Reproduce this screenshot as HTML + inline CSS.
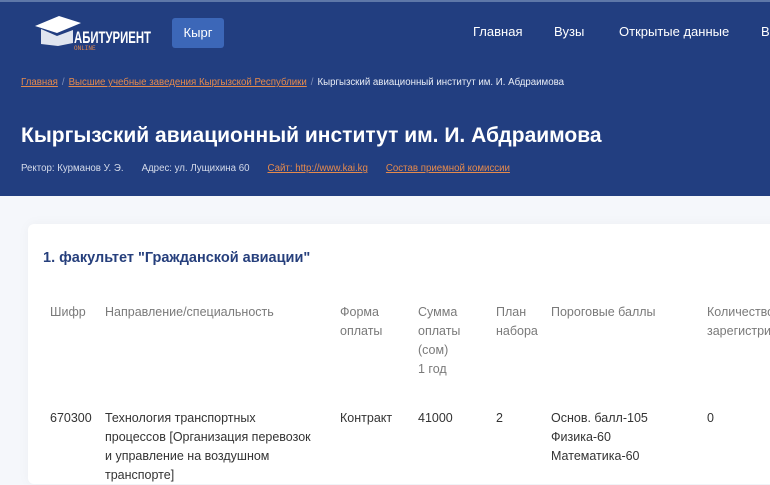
<!DOCTYPE html>
<html><head><meta charset="utf-8"><style>
*{margin:0;padding:0;box-sizing:border-box}
body{width:770px;height:470px;overflow:hidden;background:#f5f7fb;font-family:"Liberation Sans",sans-serif;position:relative}
.hdr{position:absolute;left:0;top:0;width:770px;height:196px;background:#223e80;border-top:2px solid #5e77a8}
.logo{position:absolute;left:33px;top:12px}
.btn{position:absolute;left:172px;top:16px;width:52px;height:30px;background:#3c67b8;border-radius:3px;color:#fff;font-size:13px;line-height:30px;text-align:center}
.nav{position:absolute;top:22px;color:#fff;font-size:13px}
.bc{position:absolute;left:21px;top:75px;font-size:9.7px;color:#e8ecf5;white-space:nowrap}
.bc a{color:#e58a4c;text-decoration:underline}
.bc span{color:#7f8fb8;margin:0 4px}
h1{position:absolute;left:21px;top:122px;color:#fff;font-size:21px;font-weight:bold;white-space:nowrap}
.meta{position:absolute;left:21px;top:161px;font-size:9.7px;color:#d5dbea;white-space:nowrap;word-spacing:0}
.meta i{display:inline-block;width:18px}
.meta a{color:#e58a4c;text-decoration:underline}
.card{position:absolute;left:28px;top:224px;width:760px;height:260px;background:#fff;border-radius:6px;box-shadow:0 0 12px rgba(0,0,0,.04)}
h2{position:absolute;left:43px;top:250px;color:#263f7c;font-size:14.5px;font-weight:bold}
.c{position:absolute;font-size:12.5px;line-height:19px;white-space:nowrap}
.h{color:#7a7a7a;top:303px}
.r{color:#333;top:409px}
</style></head><body>
<div class="hdr">
<svg class="logo" width="122" height="38" viewBox="0 0 122 38">
<polygon points="2,12 26,2 48,9 24,19" fill="#fff"/>
<path d="M8,15 L8,30 L25,32 L40,29 L40,16 L24,22 Z" fill="#e0e5ef"/>
<text x="41" y="29" fill="#fff" font-family="Liberation Sans Narrow,Liberation Sans,sans-serif" font-size="17" font-weight="bold" textLength="77" lengthAdjust="spacingAndGlyphs">АБИТУРИЕНТ</text>
<text x="41" y="36" fill="#e58a4c" font-size="6" font-family="Liberation Mono,monospace">ONLINE</text>
</svg>
<div class="btn">Кырг</div>
<div class="nav" style="left:473px">Главная</div>
<div class="nav" style="left:554px">Вузы</div>
<div class="nav" style="left:619px">Открытые данные</div>
<div class="nav" style="left:761px">В</div>
<div class="bc"><a>Главная</a><span>/</span><a>Высшие учебные заведения Кыргызской Республики</a><span>/</span>Кыргызский авиационный институт им. И. Абдраимова</div>
<h1>Кыргызский авиационный институт им. И. Абдраимова</h1>
<div class="meta">Ректор: Курманов У. Э.<i></i>Адрес: ул. Лущихина 60<i></i><a>Сайт: http://www.kai.kg</a><i></i><a>Состав приемной комиссии</a></div>
</div>
<div class="card"></div>
<h2>1. факультет "Гражданской авиации"</h2>
<div class="c h" style="left:50px">Шифр</div>
<div class="c h" style="left:105px">Направление/специальность</div>
<div class="c h" style="left:340px">Форма<br>оплаты</div>
<div class="c h" style="left:418px">Сумма<br>оплаты<br>(сом)<br>1 год</div>
<div class="c h" style="left:496px">План<br>набора</div>
<div class="c h" style="left:551px">Пороговые баллы</div>
<div class="c h" style="left:707px">Количество<br>зарегистри</div>
<div class="c r" style="left:50px">670300</div>
<div class="c r" style="left:105px">Технология транспортных<br>процессов [Организация перевозок<br>и управление на воздушном<br>транспорте]</div>
<div class="c r" style="left:340px">Контракт</div>
<div class="c r" style="left:418px">41000</div>
<div class="c r" style="left:496px">2</div>
<div class="c r" style="left:551px">Основ. балл-105<br>Физика-60<br>Математика-60</div>
<div class="c r" style="left:707px">0</div>
</body></html>
